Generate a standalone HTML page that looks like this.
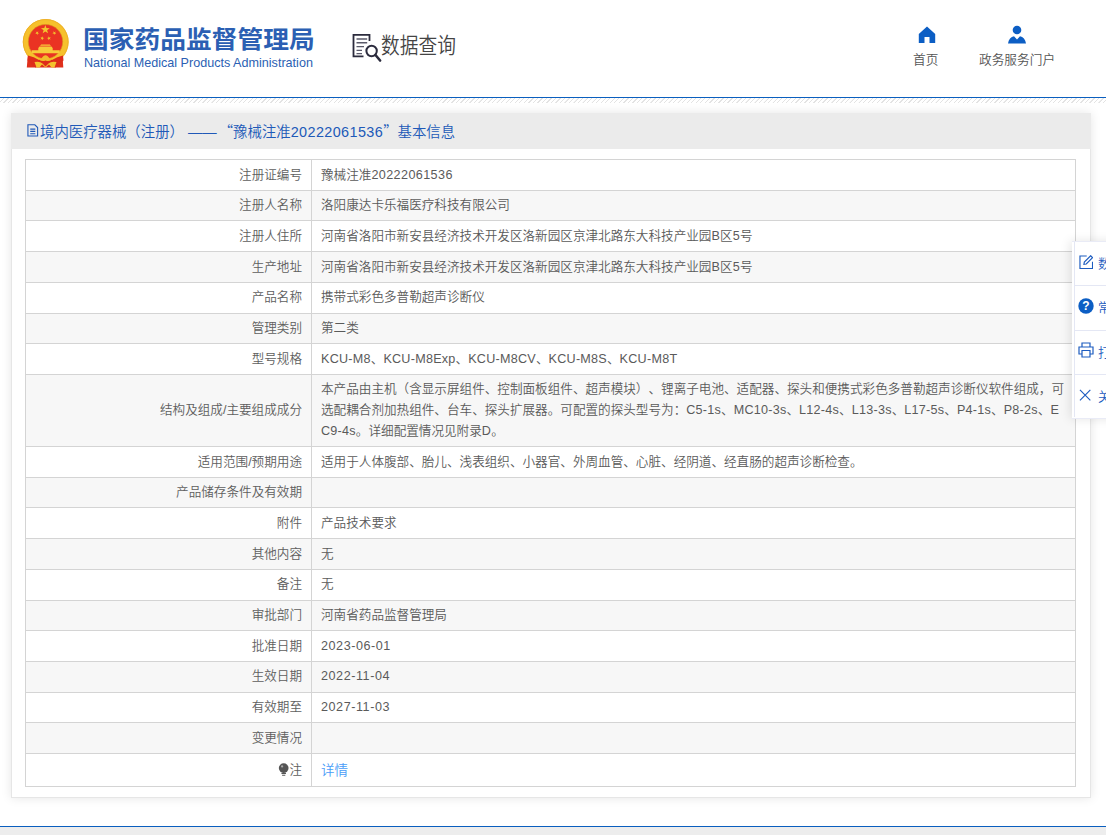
<!DOCTYPE html>
<html lang="zh-CN">
<head>
<meta charset="utf-8">
<title>国家药品监督管理局 数据查询</title>
<style>
*{box-sizing:border-box;margin:0;padding:0}
html,body{width:1106px;height:835px;overflow:hidden;background:#fff}
body{font-weight:350;text-spacing-trim:space-all;font-family:"Liberation Sans","Noto Sans CJK SC",sans-serif;color:#666;position:relative;font-size:12.6px}
.hdr{position:absolute;left:0;top:0;width:1106px;height:97px;background:#fff}
.logo{position:absolute;left:15px;top:12px;width:65px;height:65px}
.cn{position:absolute;left:83px;top:21.500px;transform:scale(1.01,.955);transform-origin:0 0;font-size:25.5px;font-weight:bold;color:#2b5fb3;white-space:nowrap;line-height:36px;letter-spacing:0}
.en{position:absolute;left:84px;top:55px;font-size:12.6px;color:#2b5fb3;white-space:nowrap;line-height:16px}
.q-ico{position:absolute;left:352px;top:33px;width:30px;height:30px}
.q-txt{position:absolute;left:381.200px;top:29.700px;font-size:21.4px;color:#444;white-space:nowrap;line-height:32px;transform:scaleX(.875);transform-origin:0 0}
.nav{position:absolute;top:50.500px;font-size:12.7px;color:#555;white-space:nowrap;line-height:18px}
.nav-ico{position:absolute}
.bline{position:absolute;left:0;top:96.6px;width:1106px;height:1.5px;background:#0a5fbf}
.hatch{position:absolute;left:0;top:98px;width:1106px;height:5px;background:repeating-linear-gradient(135deg,#fff 0,#fff 2.2px,#dcdcdc 2.4px,#dcdcdc 3.2px);opacity:.8}
.card{position:absolute;left:11px;top:113px;width:1080px;height:685px;background:#fff;box-shadow:0 0 10px rgba(0,0,0,.10);border:1px solid #e6e6e6;border-top:0}
.card-h{margin:0 -1px;height:36px;background:#ebebeb;color:#2059b8;font-size:14.4px;line-height:35px;padding-left:15px;white-space:nowrap}
.card-h .q{font-family:"Noto Sans CJK SC",sans-serif}
.card-h .d{margin:0 2px 0 4px}
.card-h .n{letter-spacing:.4px}
.card-h svg{vertical-align:-.1px;margin-right:1.5px;margin-left:.5px}
table{position:absolute;left:13px;top:46px;width:1051px;border-collapse:collapse;border:1px solid #c4c4c4;table-layout:fixed}
td{border:1px solid #d4d4d4;height:30.7px;line-height:20.7px;padding:4.5px 9px;vertical-align:middle;font-size:12.6px;color:#5a5a5a}
td.k{width:286px;text-align:right;color:#5e5e5e}
tr:nth-child(even) td{background:#f7f7f7}
tr:last-child td{height:32.7px}
td .l{letter-spacing:.25px}
td .l2{letter-spacing:.55px}
td .l3{letter-spacing:.4px}
td a{color:#4a9df8;text-decoration:none;font-size:13.5px;position:relative;top:1.200px}
.side{position:absolute;left:1071.600px;top:241px;width:60px;height:177.600px;background:#fff;border-top:1px solid #e9ebf6;border-bottom:1px solid #e9ebf6;box-shadow:-2px 0 10px rgba(0,0,0,.10)}
.side:before{content:"";position:absolute;left:2.200px;top:0;width:1px;height:175px;background:#e4e7f4}
.side div{height:44.150px;position:absolute;left:2.200px;width:58px;border-top:1px solid #e4e7f4;color:#1d5cc0;font-size:12.6px;line-height:44px;padding-left:24.100px;white-space:nowrap}
.side div:first-child{border-top:0}
.side svg{position:absolute}
.fline{position:absolute;left:0;top:825.6px;width:1106px;height:1.6px;background:#0a5fbf}
.foot{position:absolute;left:0;top:827px;width:1106px;height:8px;background:#ededed}
</style>
</head>
<body>
<div class="hdr">
  <svg class="logo" viewBox="0 0 65 65">
    <path d="M12.800 44l-1 11.500h9l4-4.500h11l4 4.500h8.500l-.800-11.500z" fill="#e0301c"/>
    <circle cx="30.700" cy="29.900" r="22.900" fill="#f6c12c"/>
    <circle cx="30.700" cy="29.900" r="22.400" fill="none" stroke="#eeb02a" stroke-width="1"/>
    <circle cx="30.500" cy="29.700" r="17.200" fill="#ea3323"/>
    <circle cx="30.500" cy="29.700" r="17.200" fill="none" stroke="#d9951c" stroke-width=".6"/>
    <path d="M30.35,13.00L31.43,16.11L34.72,16.18L32.10,18.17L33.05,21.32L30.35,19.44L27.65,21.32L28.60,18.17L25.98,16.18L29.27,16.11zM23.25,19.18L22.97,20.66L24.25,21.44L22.76,21.62L22.42,23.09L21.78,21.73L20.28,21.85L21.38,20.83L20.79,19.44L22.11,20.16zM38.25,19.18L39.39,20.16L40.71,19.44L40.12,20.83L41.22,21.85L39.72,21.73L39.08,23.09L38.74,21.62L37.25,21.44L38.53,20.66zM27.74,24.17L27.85,25.67L29.30,26.09L27.90,26.66L27.95,28.16L26.98,27.01L25.57,27.52L26.36,26.24L25.44,25.06L26.90,25.42zM33.46,24.17L34.30,25.42L35.76,25.06L34.84,26.24L35.63,27.52L34.22,27.01L33.25,28.16L33.30,26.66L31.90,26.09L33.35,25.67z" fill="#f3c62f"/>
    <path d="M25 33.800l1.200-1.300h8.600l1.200 1.300zM23.300 36l1.200-1.500h12l1.200 1.500v2.200h-14.400zM16.700 38.200h28v3h-28z" fill="#f7cb3a"/>
    <path d="M13 43.500q6 1 11 4.500l6.500-4 6.500 4q5-3.500 11-4.500l.500 5-8 7h-20l-8-7z" fill="#de2c1a"/>
    <path d="M19.500 50q5.500-1 8 1.500l3 3 3-3q2.500-2.500 8-1.500l-2 5.600h-3l-2.500-3-3.500 3-3.500-3-2.500 3h-3z" fill="#f4c22e"/>
    <path d="M24 47.500q3-1 4.500-3.500 2-1.500 4 0 1.500 2.500 4.500 3.500-3 2.500-6.500 1-3.500 1.500-6.500-1z" fill="#f1bb2c"/>
  </svg>
  <div class="cn">国家药品监督管理局</div>
  <div class="en">National Medical Products Administration</div>
  <svg class="q-ico" viewBox="0 0 30 30" fill="none" stroke="#2b2b3d">
    <path d="M17.500 8V1.800H1.500v21.600h10" stroke-width="1.800"/>
    <path d="M4.500 6h10.700M4.500 9.800h10.700M4.500 13.600h7.500M4.500 17.400h5.500M4.500 20.600h5.500" stroke-width="1.400" stroke="#5a5a6a"/>
    <circle cx="19.600" cy="18" r="5.200" stroke-width="2"/>
    <path d="M23.500 22l4.600 5.500" stroke-width="2.600" stroke-linecap="round"/>
  </svg>
  <div class="q-txt">数据查询</div>
  <svg class="nav-ico" style="left:917.600px;top:26px" width="18" height="18" viewBox="0 0 18 18"><path d="M9 .5L.8 8v9h5.700v-6h5v6h5.700V8z" fill="#0c5ec4"/></svg>
  <div class="nav" style="left:913px">首页</div>
  <svg class="nav-ico" style="left:1007px;top:25px" width="20" height="19" viewBox="0 0 20 19"><circle cx="10" cy="5" r="4.300" fill="#0c5ec4"/><path d="M1 18.500c.5-4 3-6.500 6-7.200l3 3.200 3-3.200c3 .7 5.500 3.200 6 7.200z" fill="#0c5ec4"/></svg>
  <div class="nav" style="left:979px">政务服务门户</div>
</div>
<div class="bline"></div>
<div class="hatch"></div>

<div class="card">
  <div class="card-h"><svg width="12" height="13" viewBox="0 0 13 14" fill="none" stroke="#2059b8" stroke-width="1.200"><path d="M1 .8h7.500l3 3V13H1z"/><path d="M3.500 5.500h5.500M3.500 8h5.500M3.500 10.500h5.500"/></svg><span>境内医疗器械（注册）</span><span class="d">——</span><span class="q">“</span><span>豫械注准</span><span class="n">20222061536</span><span class="q">”</span><span class="e">基本信息</span></div>
  <table>
    <tr><td class="k">注册证编号</td><td>豫械注准<span class="l3">20222061536</span></td></tr>
    <tr><td class="k">注册人名称</td><td>洛阳康达卡乐福医疗科技有限公司</td></tr>
    <tr><td class="k">注册人住所</td><td>河南省洛阳市新安县经济技术开发区洛新园区京津北路东大科技产业园<span class="l">B</span>区<span class="l">5</span>号</td></tr>
    <tr><td class="k">生产地址</td><td>河南省洛阳市新安县经济技术开发区洛新园区京津北路东大科技产业园<span class="l">B</span>区<span class="l">5</span>号</td></tr>
    <tr><td class="k">产品名称</td><td>携带式彩色多普勒超声诊断仪</td></tr>
    <tr><td class="k">管理类别</td><td>第二类</td></tr>
    <tr><td class="k">型号规格</td><td><span class="l">KCU-M8</span>、<span class="l">KCU-M8Exp</span>、<span class="l">KCU-M8CV</span>、<span class="l">KCU-M8S</span>、<span class="l">KCU-M8T</span></td></tr>
    <tr class="tall"><td class="k">结构及组成/主要组成成分</td><td>本产品由主机（含显示屏组件、控制面板组件、超声模块）、锂离子电池、适配器、探头和便携式彩色多普勒超声诊断仪软件组成，可<br>选配耦合剂加热组件、台车、探头扩展器。可配置的探头型号为：<span class="l">C5-1s</span>、<span class="l">MC10-3s</span>、<span class="l">L12-4s</span>、<span class="l">L13-3s</span>、<span class="l">L17-5s</span>、<span class="l">P4-1s</span>、<span class="l">P8-2s</span>、<span class="l">E</span><br><span class="l">C9-4s</span>。详细配置情况见附录<span class="l">D</span>。</td></tr>
    <tr><td class="k">适用范围/预期用途</td><td>适用于人体腹部、胎儿、浅表组织、小器官、外周血管、心脏、经阴道、经直肠的超声诊断检查。</td></tr>
    <tr><td class="k">产品储存条件及有效期</td><td></td></tr>
    <tr><td class="k">附件</td><td>产品技术要求</td></tr>
    <tr><td class="k">其他内容</td><td>无</td></tr>
    <tr><td class="k">备注</td><td>无</td></tr>
    <tr><td class="k">审批部门</td><td>河南省药品监督管理局</td></tr>
    <tr><td class="k">批准日期</td><td><span class="l2">2023-06-01</span></td></tr>
    <tr><td class="k">生效日期</td><td><span class="l2">2022-11-04</span></td></tr>
    <tr><td class="k">有效期至</td><td><span class="l2">2027-11-03</span></td></tr>
    <tr><td class="k">变更情况</td><td></td></tr>
    <tr><td class="k"><svg width="11.400" height="13.600" viewBox="0 0 10 12" style="vertical-align:-3.300px;margin-right:.5px"><circle cx="5" cy="4.500" r="4.300" fill="#555"/><path d="M3 8.500h4v1.200H3zM3.600 10.300h2.800v1H3.600z" fill="#555"/><circle cx="3.600" cy="3" r="1" fill="#aaa"/></svg>注</td><td><a>详情</a></td></tr>
  </table>
</div>

<div class="side">
  <div style="top:0"><svg style="left:4.800px;top:12.800px" width="14.500" height="14.500" viewBox="0 0 15 15" fill="none" stroke="#1d5cc0" stroke-width="1.200"><path d="M8 1H1v13h13V7"/><path d="M12 .8l2 2-6.500 6.500-2.400.4.400-2.400z"/></svg>数据纠错</div>
  <div style="top:43.300px"><svg style="left:3.800px;top:11.800px" width="16" height="16" viewBox="0 0 16 16"><circle cx="8" cy="8" r="7.700" fill="#0c5ec4"/><text x="8" y="12.300" font-size="12" font-weight="bold" text-anchor="middle" fill="#fff" font-family="Liberation Sans, sans-serif">?</text></svg>常见问题</div>
  <div style="top:87.500px"><svg style="left:3.800px;top:11.500px" width="16" height="16" viewBox="0 0 16 16" fill="none" stroke="#1d5cc0" stroke-width="1.200"><path d="M4 5V1h8v4"/><path d="M4 12H1V5h14v7h-3"/><path d="M4 8.500h8V15H4z"/></svg>打印</div>
  <div style="top:131.800px"><svg style="left:5.700px;top:14.200px" width="12.300" height="12.300" viewBox="0 0 13 13" fill="none" stroke="#1d5cc0" stroke-width="1.200"><path d="M1 1l11 11M12 1l-11 11"/></svg>关闭</div>
</div>

<div class="fline"></div>
<div class="foot"></div>
</body>
</html>
